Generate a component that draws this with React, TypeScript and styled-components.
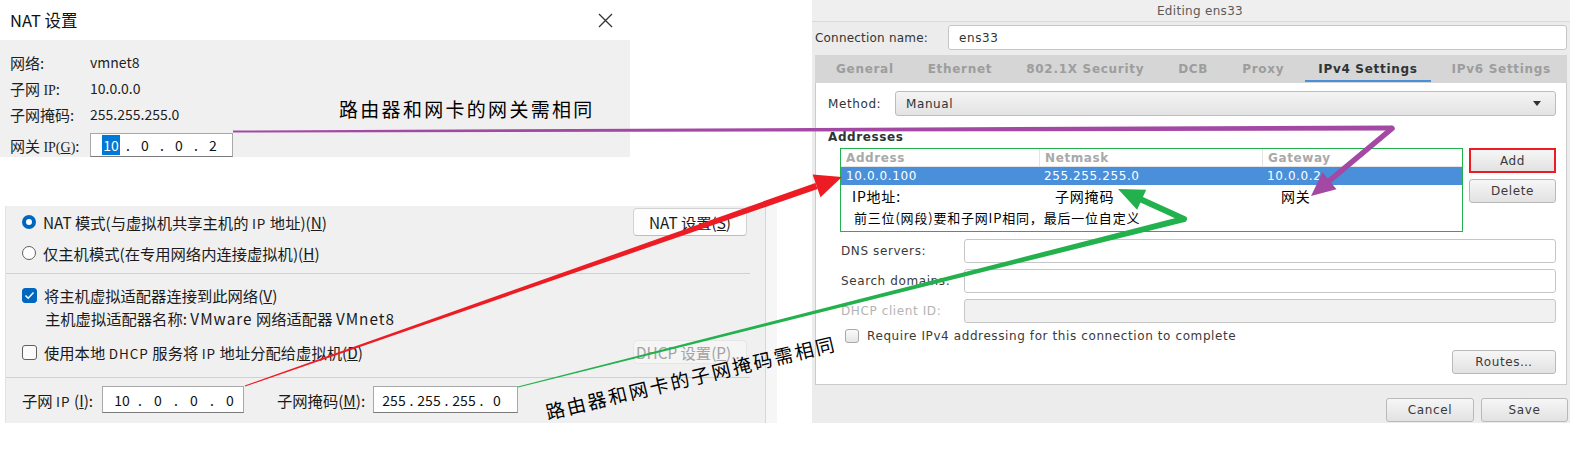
import React from "react";
import styled, { createGlobalStyle, css } from "styled-components";

const cjk = `"Noto Sans CJK SC", "Noto Sans", sans-serif`;
const gtk = `"DejaVu Sans", "Noto Sans", sans-serif`;

const GlobalStyle = createGlobalStyle`
  html, body { margin: 0; padding: 0; background: #ffffff; }
  body { width: 1570px; height: 471px; overflow: hidden; }
  * { box-sizing: border-box; }
`;

const Page = styled.div`
  position: relative;
  width: 1570px;
  height: 471px;
  display: flex;
  justify-content: space-between;
  align-items: flex-start;
  background: #fff;
`;

/* ---------------- Left column (Windows VMware dialogs) ---------------- */

const LeftColumn = styled.div`
  width: 780px;
  display: flex;
  flex-direction: column;
  font-family: ${cjk};
  color: #1a1a1a;
`;

const NatDialog = styled.section`
  width: 630px;
  height: 157px;
  display: flex;
  flex-direction: column;
`;

const DialogTitleBar = styled.header`
  height: 40px;
  background: #fff;
  display: flex;
  align-items: center;
  justify-content: space-between;
  padding: 0 17px 0 10px;
  font-size: 16.5px;
  color: #111;
`;

const DialogBody = styled.div`
  flex: 1;
  background: #f0f0f0;
  padding: 9px 10px 0;
  display: flex;
  flex-direction: column;
`;

const InfoRow = styled.div`
  height: 26px;
  display: flex;
  align-items: center;
  font-size: 14px;
  color: #1e1e1e;
`;

const GatewayRow = styled(InfoRow)`
  margin-top: 6px;
  height: 24px;
`;

const InfoLabel = styled.span`
  width: 80px;
  flex: none;
  white-space: nowrap;
  font-size: 15px;
`;

const SerifLatin = styled.span`
  font-family: "Liberation Serif", serif;
  font-size: 14px;
`;

const IpBox = styled.div<{ $w: number; $h: number; $pl: number }>`
  width: ${(p) => p.$w}px;
  height: ${(p) => p.$h}px;
  background: #fff;
  border: 1px solid #a8a8a8;
  border-bottom-color: #7a7a7a;
  display: flex;
  align-items: center;
  padding-left: ${(p) => p.$pl}px;
  font-size: 14px;
  color: #111;
  flex: none;
`;

const Octet = styled.span<{ $w: number }>`
  width: ${(p) => p.$w}px;
  text-align: center;
  flex: none;
`;

const Dot = styled.span<{ $w: number }>`
  width: ${(p) => p.$w}px;
  text-align: center;
  flex: none;
`;

const Selected = styled.span`
  background: #0078d7;
  color: #fff;
  padding: 0 1px;
`;

const VmnetPanel = styled.section`
  margin: 49px 0 0 5px;
  width: 772px;
  height: 217px;
  display: flex;
  background: #f6f6f6;
`;

const VmnetInner = styled.div`
  width: 761px;
  height: 100%;
  background: #f0f0f0;
  border-left: 1px solid #e2e2e2;
  border-right: 1px solid #d6d6d6;
  padding: 2px 18px 0 16px;
  display: flex;
  flex-direction: column;
  font-size: 15.3px;
`;

const OptionRow = styled.div<{ $h: number; $mt: number; $indent?: number }>`
  height: ${(p) => p.$h}px;
  margin-top: ${(p) => p.$mt}px;
  padding-left: ${(p) => p.$indent ?? 0}px;
  display: flex;
  align-items: center;
  justify-content: space-between;
  white-space: pre;
`;

const OptionLabel = styled.label`
  display: flex;
  align-items: center;
  gap: 7px;
  color: #1a1a1a;
`;

const Radio = styled.span<{ $on?: boolean }>`
  width: 14px;
  height: 14px;
  border-radius: 50%;
  flex: none;
  ${(p) =>
    p.$on
      ? css`
          background: #fff;
          border: 4px solid #0067c0;
        `
      : css`
          background: #fff;
          border: 1px solid #5f5f5f;
        `}
`;

const WinCheck = styled.span<{ $on?: boolean }>`
  width: 15px;
  height: 15px;
  border-radius: 3px;
  flex: none;
  display: flex;
  align-items: center;
  justify-content: center;
  ${(p) =>
    p.$on
      ? css`
          background: #0067c0;
          border: 1px solid #0067c0;
        `
      : css`
          background: #fbfbfb;
          border: 1px solid #5f5f5f;
        `}
`;

const WinButton = styled.button<{ $disabled?: boolean }>`
  width: 114px;
  height: ${(p) => (p.$disabled ? 24 : 28)}px;
  border-radius: 4px;
  font-family: ${cjk};
  font-size: 15.3px;
  padding: 0;
  display: flex;
  align-items: center;
  justify-content: center;
  ${(p) =>
    p.$disabled
      ? css`
          background: #f5f5f5;
          border: 1px solid #e6e6e6;
          color: #a3a3a3;
        `
      : css`
          background: #fdfdfd;
          border: 1px solid #d2d2d2;
          border-bottom-color: #bdbdbd;
          color: #1a1a1a;
        `}
`;

const Separator = styled.hr<{ $mt: number }>`
  margin: ${(p) => p.$mt}px -3px 0 -16px;
  border: none;
  height: 1px;
  background: #d0d0d0;
  flex: none;
`;

const SubnetRow = styled.div`
  margin-top: 8px;
  height: 27px;
  display: flex;
  align-items: center;
  white-space: nowrap;
`;

const SubnetLabel = styled.span<{ $w: number; $ml?: number }>`
  width: ${(p) => p.$w}px;
  margin-left: ${(p) => p.$ml ?? 0}px;
  flex: none;
`;

const SmallLatin = styled.span`
  font-size: 13.5px;
  letter-spacing: 1px;
`;

const WideLatin = styled.span`
  letter-spacing: 1px;
`;

/* ---------------- Right column (GTK editor) ---------------- */

const GtkWindow = styled.section`
  width: 758px;
  height: 423px;
  background: #ececec;
  display: flex;
  flex-direction: column;
  font-family: ${gtk};
  font-size: 12px;
  letter-spacing: 0.6px;
  color: #2e3436;
`;

const GtkTitle = styled.header`
  height: 22px;
  display: flex;
  align-items: center;
  justify-content: center;
  padding-left: 18px;
  color: #5a5a5a;
  background: #efefef;
  border-bottom: 1px solid #dadada;
  letter-spacing: 0.3px;
`;

const ConnRow = styled.div`
  margin: 3px 3px 0 0;
  height: 25px;
  display: flex;
  align-items: center;
`;

const ConnLabel = styled.span`
  width: 136px;
  padding-left: 3px;
  flex: none;
  color: #333;
  letter-spacing: 0.2px;
`;

const GtkEntry = styled.div<{ $disabled?: boolean }>`
  flex: 1;
  height: 100%;
  border: 1px solid #c6c6c6;
  border-radius: 3px;
  background: ${(p) => (p.$disabled ? "#f1f1f1" : "#ffffff")};
  display: flex;
  align-items: center;
  padding-left: 10px;
  color: #2e3436;
`;

const TabBar = styled.nav`
  margin: 5px 3px 0;
  height: 28px;
  background: #d6d6d6;
  display: flex;
  padding-left: 4px;
`;

const Tab = styled.span<{ $active?: boolean }>`
  position: relative;
  padding: 0 17px;
  display: flex;
  align-items: center;
  font-weight: bold;
  letter-spacing: 0.7px;
  white-space: nowrap;
  color: ${(p) => (p.$active ? "#2e3436" : "#9d9d9d")};
  ${(p) =>
    p.$active &&
    css`
      &::after {
        content: "";
        position: absolute;
        left: 4px;
        right: 4px;
        bottom: 1px;
        height: 2px;
        background: #4a90d9;
      }
    `}
`;

const GtkContent = styled.div`
  margin: 0 3px;
  height: 302px;
  background: #fff;
  border: 1px solid #cbcbcb;
  border-top: none;
  padding: 8px 10px 0 12px;
  display: flex;
  flex-direction: column;
`;

const MethodRow = styled.div`
  height: 25px;
  display: flex;
  align-items: center;
`;

const MethodLabel = styled.span`
  width: 67px;
  flex: none;
`;

const Combo = styled.div`
  flex: 1;
  height: 100%;
  border: 1px solid #bdbdbd;
  border-radius: 3px;
  background: linear-gradient(#f4f4f4, #e3e3e3);
  display: flex;
  align-items: center;
  justify-content: space-between;
  padding: 0 14px 0 10px;
`;

const ComboArrow = styled.span`
  width: 0;
  height: 0;
  border-left: 4.5px solid transparent;
  border-right: 4.5px solid transparent;
  border-top: 5px solid #2e3436;
`;

const SectionTitle = styled.div`
  margin-top: 13px;
  height: 16px;
  display: flex;
  align-items: center;
  font-weight: bold;
  color: #2e3436;
`;

const AddrRow = styled.div`
  margin-top: 3px;
  padding-left: 12px;
  display: flex;
  gap: 6px;
`;

const AddrTable = styled.div`
  width: 623px;
  height: 84px;
  border: 1.5px solid #22b14c;
  display: flex;
  flex-direction: column;
  background: #fff;
`;

const AddrGrid = styled.div<{ $h: number }>`
  display: grid;
  grid-template-columns: 198px 223px 1fr;
  height: ${(p) => p.$h}px;
  flex: none;
`;

const AddrHeader = styled(AddrGrid)`
  border-bottom: 1px solid #e4e4e4;
`;

const HeaderCell = styled.div`
  padding-left: 5px;
  display: flex;
  align-items: center;
  color: #a9a9a9;
  font-weight: bold;
  & + & {
    border-left: 1px solid #e4e4e4;
  }
`;

const SelectedRow = styled(AddrGrid)`
  background: #4a8fd9;
  color: #fff;
`;

const DataCell = styled.div`
  padding-left: 5px;
  display: flex;
  align-items: center;
`;

const NoteCell = styled.div<{ $pl: number }>`
  padding-left: ${(p) => p.$pl}px;
  display: flex;
  align-items: center;
  font-family: ${cjk};
  font-size: 14px;
  letter-spacing: 0.8px;
  color: #000;
  white-space: nowrap;
`;

const NoteLine = styled.div`
  height: 20px;
  padding-left: 13px;
  display: flex;
  align-items: center;
  font-family: ${cjk};
  font-size: 13px;
  letter-spacing: 0.8px;
  color: #000;
  white-space: nowrap;
`;

const SideButtons = styled.div`
  display: flex;
  flex-direction: column;
  gap: 6px;
`;

const GtkButton = styled.button<{ $w: number; $flagged?: boolean }>`
  width: ${(p) => p.$w}px;
  height: ${(p) => (p.$flagged ? 25 : 24)}px;
  border: 1px solid #b9b9b9;
  border-radius: 3px;
  background: linear-gradient(#f6f6f6, #e2e2e2);
  font-family: ${gtk};
  font-size: 12px;
  letter-spacing: 0.6px;
  color: #3a3a3a;
  padding: 0;
  ${(p) =>
    p.$flagged &&
    css`
      border: 2px solid #ed1c24;
      border-radius: 0;
    `}
`;

const FieldRow = styled.div<{ $mt: number; $muted?: boolean }>`
  margin-top: ${(p) => p.$mt}px;
  height: 24px;
  padding-left: 13px;
  display: flex;
  align-items: center;
  color: ${(p) => (p.$muted ? "#b4b4b4" : "#3a3a3a")};
`;

const FieldLabel = styled.span`
  width: 123px;
  flex: none;
  white-space: nowrap;
`;

const CheckRow = styled.div`
  margin-top: 6px;
  height: 13px;
  padding-left: 17px;
  display: flex;
  align-items: center;
  gap: 8px;
  color: #3a3a3a;
  white-space: nowrap;
`;

const GtkCheck = styled.span`
  width: 14px;
  height: 14px;
  border: 1px solid #a8a8a8;
  border-radius: 3px;
  background: linear-gradient(#fafafa, #e6e6e6);
  flex: none;
`;

const RoutesRow = styled.div`
  margin-top: 8px;
  display: flex;
  justify-content: flex-end;
`;

const GtkFooter = styled.div`
  flex: 1;
  display: flex;
  justify-content: flex-end;
  align-items: flex-start;
  gap: 7px;
  padding: 13px 2px 0 0;
`;

/* ---------------- Annotations overlay ---------------- */

const Overlay = styled.svg`
  position: absolute;
  left: 0;
  top: 0;
  width: 1570px;
  height: 471px;
  pointer-events: none;
  z-index: 2;
`;

const Annotation = styled.div<{ $x: number; $y: number; $rot?: number }>`
  position: absolute;
  left: ${(p) => p.$x}px;
  top: ${(p) => p.$y}px;
  z-index: 3;
  font-family: ${cjk};
  font-size: 19px;
  letter-spacing: 2.3px;
  color: #000;
  white-space: nowrap;
  line-height: 24px;
  transform-origin: 0 50%;
  transform: rotate(${(p) => p.$rot ?? 0}deg);
`;

function taper(x1: number, y1: number, x2: number, y2: number, w1: number, w2: number) {
  const dx = x2 - x1;
  const dy = y2 - y1;
  const L = Math.hypot(dx, dy);
  const nx = -dy / L;
  const ny = dx / L;
  const p = (x: number, y: number) => `${x.toFixed(1)},${y.toFixed(1)}`;
  return [
    p(x1 + (nx * w1) / 2, y1 + (ny * w1) / 2),
    p(x2 + (nx * w2) / 2, y2 + (ny * w2) / 2),
    p(x2 - (nx * w2) / 2, y2 - (ny * w2) / 2),
    p(x1 - (nx * w1) / 2, y1 - (ny * w1) / 2),
  ].join(" ");
}

function head(tipX: number, tipY: number, fromX: number, fromY: number, len: number, half: number) {
  const dx = tipX - fromX;
  const dy = tipY - fromY;
  const L = Math.hypot(dx, dy);
  const ux = dx / L;
  const uy = dy / L;
  const bx = tipX - ux * len;
  const by = tipY - uy * len;
  const nx = -uy;
  const ny = ux;
  return {
    points: `${tipX},${tipY} ${(bx + nx * half).toFixed(1)},${(by + ny * half).toFixed(1)} ${(bx - nx * half).toFixed(1)},${(by - ny * half).toFixed(1)}`,
    bx,
    by,
  };
}

function Arrows() {
  const purple = "#a349a4";
  const red = "#ed1c24";
  const green = "#22b14c";
  const pHead = head(1311, 196, 1392, 129, 24, 11);
  const rHead = head(842, 177, 245, 386, 27, 12);
  const gHead = head(1118, 189, 1184, 219, 26, 11);
  return (
    <Overlay viewBox="0 0 1570 471">
      <polygon fill={purple} points={taper(233, 131.5, 1392, 128, 2, 5)} />
      <line x1={1392} y1={128.5} x2={pHead.bx} y2={pHead.by} stroke={purple} strokeWidth={5.5} strokeLinecap="round" />
      <polygon fill={purple} points={pHead.points} />

      <polygon fill={red} points={taper(245, 386, rHead.bx, rHead.by, 1, 6.5)} />
      <polygon fill={red} points={rHead.points} />

      <polygon fill={green} points={taper(518, 387, 1184, 219, 1, 6)} />
      <line x1={1184} y1={219} x2={gHead.bx} y2={gHead.by} stroke={green} strokeWidth={6} strokeLinecap="round" />
      <polygon fill={green} points={gHead.points} />
    </Overlay>
  );
}

function CloseIcon() {
  return (
    <svg width="15" height="15" viewBox="0 0 15 15" aria-hidden>
      <path d="M1 1 L14 14 M14 1 L1 14" stroke="#333" strokeWidth="1.3" fill="none" />
    </svg>
  );
}

function CheckMark() {
  return (
    <svg width="11" height="9" viewBox="0 0 11 9" aria-hidden>
      <path d="M1.5 4.5 L4.2 7.2 L9.5 1.5" stroke="#fff" strokeWidth="1.5" fill="none" />
    </svg>
  );
}

export default function App() {
  return (
    <>
      <GlobalStyle />
      <Page>
        <LeftColumn>
          <NatDialog>
            <DialogTitleBar>
              <span>NAT 设置</span>
              <CloseIcon />
            </DialogTitleBar>
            <DialogBody>
              <InfoRow>
                <InfoLabel>网络:</InfoLabel>
                <span>vmnet8</span>
              </InfoRow>
              <InfoRow>
                <InfoLabel>
                  子网 <SerifLatin>IP</SerifLatin>:
                </InfoLabel>
                <span>10.0.0.0</span>
              </InfoRow>
              <InfoRow>
                <InfoLabel>子网掩码:</InfoLabel>
                <span>255.255.255.0</span>
              </InfoRow>
              <GatewayRow>
                <InfoLabel>
                  网关 <SerifLatin>IP(<u>G</u>)</SerifLatin>:
                </InfoLabel>
                <IpBox $w={143} $h={24} $pl={8}>
                  <Octet $w={24}>
                    <Selected>10</Selected>
                  </Octet>
                  <Dot $w={10}>.</Dot>
                  <Octet $w={24}>0</Octet>
                  <Dot $w={10}>.</Dot>
                  <Octet $w={24}>0</Octet>
                  <Dot $w={10}>.</Dot>
                  <Octet $w={24}>2</Octet>
                </IpBox>
              </GatewayRow>
            </DialogBody>
          </NatDialog>

          <VmnetPanel>
            <VmnetInner>
              <OptionRow $h={28} $mt={0}>
                <OptionLabel>
                  <Radio $on />
                  <span>
                    NAT 模式(与虚拟机共享主机的 <SmallLatin>IP</SmallLatin> 地址)(<u>N</u>)
                  </span>
                </OptionLabel>
                <WinButton>
                  NAT 设置(<u>S</u>)
                </WinButton>
              </OptionRow>
              <OptionRow $h={22} $mt={6}>
                <OptionLabel>
                  <Radio />
                  <span>
                    仅主机模式(在专用网络内连接虚拟机)(<u>H</u>)
                  </span>
                </OptionLabel>
              </OptionRow>
              <Separator $mt={9} />
              <OptionRow $h={22} $mt={10}>
                <OptionLabel>
                  <WinCheck $on>
                    <CheckMark />
                  </WinCheck>
                  <span>
                    将主机虚拟适配器连接到此网络(<u>V</u>)
                  </span>
                </OptionLabel>
              </OptionRow>
              <OptionRow $h={22} $mt={1} $indent={23}>
                <span>
                  {"主机虚拟适配器名称: "}
                  <WideLatin>VMware</WideLatin>
                  {" 网络适配器 "}
                  <WideLatin>VMnet8</WideLatin>
                </span>
              </OptionRow>
              <OptionRow $h={24} $mt={11}>
                <OptionLabel>
                  <WinCheck />
                  <span>
                    使用本地 <SmallLatin>DHCP</SmallLatin> 服务将 <SmallLatin>IP</SmallLatin> 地址分配给虚拟机(<u>D</u>)
                  </span>
                </OptionLabel>
                <WinButton $disabled>
                  DHCP 设置(<u>P</u>)...
                </WinButton>
              </OptionRow>
              <Separator $mt={13} />
              <SubnetRow>
                <SubnetLabel $w={80}>
                  子网 <SmallLatin>IP</SmallLatin> (<u>I</u>):
                </SubnetLabel>
                <IpBox $w={142} $h={27} $pl={6}>
                  <Octet $w={26}>10</Octet>
                  <Dot $w={10}>.</Dot>
                  <Octet $w={26}>0</Octet>
                  <Dot $w={10}>.</Dot>
                  <Octet $w={26}>0</Octet>
                  <Dot $w={10}>.</Dot>
                  <Octet $w={26}>0</Octet>
                </IpBox>
                <SubnetLabel $w={96} $ml={33}>
                  子网掩码(<u>M</u>):
                </SubnetLabel>
                <IpBox $w={145} $h={27} $pl={6}>
                  <Octet $w={28}>255</Octet>
                  <Dot $w={7}>.</Dot>
                  <Octet $w={28}>255</Octet>
                  <Dot $w={7}>.</Dot>
                  <Octet $w={28}>255</Octet>
                  <Dot $w={7}>.</Dot>
                  <Octet $w={24}>0</Octet>
                </IpBox>
              </SubnetRow>
            </VmnetInner>
          </VmnetPanel>
        </LeftColumn>

        <GtkWindow>
          <GtkTitle>Editing ens33</GtkTitle>
          <ConnRow>
            <ConnLabel>Connection name:</ConnLabel>
            <GtkEntry>ens33</GtkEntry>
          </ConnRow>
          <TabBar>
            <Tab>General</Tab>
            <Tab>Ethernet</Tab>
            <Tab>802.1X Security</Tab>
            <Tab>DCB</Tab>
            <Tab>Proxy</Tab>
            <Tab $active>IPv4 Settings</Tab>
            <Tab>IPv6 Settings</Tab>
          </TabBar>
          <GtkContent>
            <MethodRow>
              <MethodLabel>Method:</MethodLabel>
              <Combo>
                <span>Manual</span>
                <ComboArrow />
              </Combo>
            </MethodRow>
            <SectionTitle>Addresses</SectionTitle>
            <AddrRow>
              <AddrTable>
                <AddrHeader $h={18}>
                  <HeaderCell>Address</HeaderCell>
                  <HeaderCell>Netmask</HeaderCell>
                  <HeaderCell>Gateway</HeaderCell>
                </AddrHeader>
                <SelectedRow $h={18}>
                  <DataCell>10.0.0.100</DataCell>
                  <DataCell>255.255.255.0</DataCell>
                  <DataCell>10.0.0.2</DataCell>
                </SelectedRow>
                <AddrGrid $h={22}>
                  <NoteCell $pl={11}>IP地址:</NoteCell>
                  <NoteCell $pl={16}>子网掩码</NoteCell>
                  <NoteCell $pl={19}>网关</NoteCell>
                </AddrGrid>
                <NoteLine>前三位(网段)要和子网IP相同，最后一位自定义</NoteLine>
              </AddrTable>
              <SideButtons>
                <GtkButton $w={87} $flagged>
                  Add
                </GtkButton>
                <GtkButton $w={87}>Delete</GtkButton>
              </SideButtons>
            </AddrRow>
            <FieldRow $mt={7}>
              <FieldLabel>DNS servers:</FieldLabel>
              <GtkEntry />
            </FieldRow>
            <FieldRow $mt={6}>
              <FieldLabel>Search domains:</FieldLabel>
              <GtkEntry />
            </FieldRow>
            <FieldRow $mt={6} $muted>
              <FieldLabel>DHCP client ID:</FieldLabel>
              <GtkEntry $disabled />
            </FieldRow>
            <CheckRow>
              <GtkCheck />
              <span>Require IPv4 addressing for this connection to complete</span>
            </CheckRow>
            <RoutesRow>
              <GtkButton $w={104}>Routes…</GtkButton>
            </RoutesRow>
          </GtkContent>
          <GtkFooter>
            <GtkButton $w={88}>Cancel</GtkButton>
            <GtkButton $w={87}>Save</GtkButton>
          </GtkFooter>
        </GtkWindow>

        <Arrows />
        <Annotation $x={339} $y={97}>路由器和网卡的网关需相同</Annotation>
        <Annotation $x={546} $y={400} $rot={-13.5}>
          路由器和网卡的子网掩码需相同
        </Annotation>
      </Page>
    </>
  );
}
